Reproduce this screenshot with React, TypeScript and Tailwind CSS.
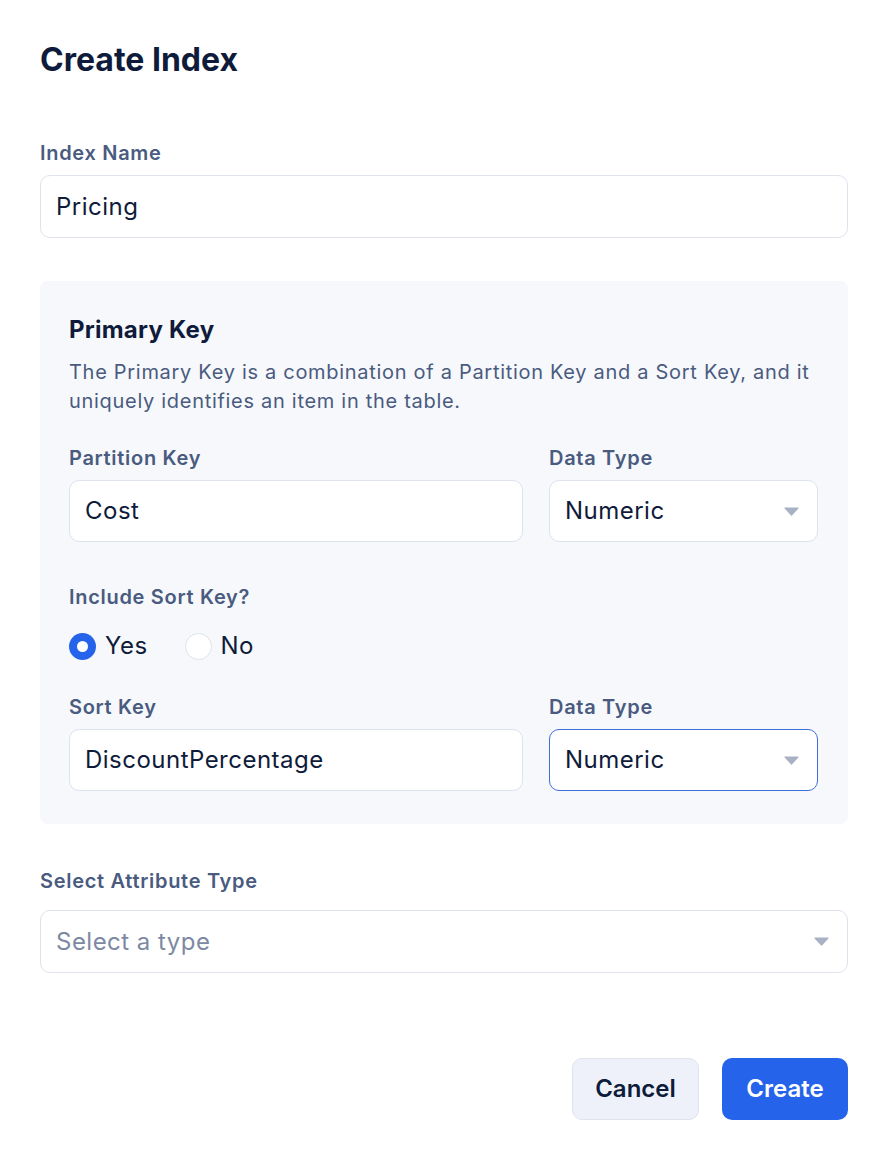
import React from 'react';

// Small down-pointing caret used in the select boxes
function Caret() {
  return (
    <svg width="15" height="9" viewBox="0 0 15 9" className="shrink-0">
      <path d="M1 1 L14 1 L7.5 8 Z" fill="#a9b1c4" stroke="#a9b1c4" strokeWidth="1.2" strokeLinejoin="round" />
    </svg>
  );
}

function Label({ children }: { children: React.ReactNode }) {
  return <div className="h-7 text-[20px] leading-7 font-semibold tracking-[0.035em] text-[#4a5b80]">{children}</div>;
}

function TextInput({ value }: { value: string }) {
  return (
    <div className="flex h-[62px] items-center rounded-[10px] border border-[#dde2ec] bg-white px-[15px] text-[24px] tracking-[0.02em] text-[#0f1b3a]">
      {value}
    </div>
  );
}

function SelectBox({ value, focused }: { value: string; focused?: boolean }) {
  return (
    <div
      className={
        focused
          ? 'flex h-[62px] items-center justify-between rounded-[10px] border border-[#3d6fdc] bg-white pl-[15px] pr-[18px] text-[24px] tracking-[0.02em]'
          : 'flex h-[62px] items-center justify-between rounded-[10px] border border-[#dde2ec] bg-white pl-[15px] pr-[18px] text-[24px] tracking-[0.02em]'
      }
    >
      <span className="text-[#0f1b3a]">{value}</span>
      <Caret />
    </div>
  );
}

function Radio({ checked, label }: { checked?: boolean; label: string }) {
  return (
    <label className="flex items-center gap-[9px]">
      {checked ? (
        <span className="flex h-[27px] w-[27px] items-center justify-center rounded-full bg-[#2563eb]">
          <span className="h-[11px] w-[11px] rounded-full bg-white" />
        </span>
      ) : (
        <span className="h-[27px] w-[27px] rounded-full border border-[#dde2ec] bg-white" />
      )}
      <span className="text-[24px] tracking-[0.02em] text-[#0f1b3a]">{label}</span>
    </label>
  );
}

export default function App() {
  return (
    <div className="min-h-[1164px] w-full bg-white font-['Inter','Liberation_Sans',sans-serif]">
      <div className="ml-10 w-[808px] pt-10 pb-11">
        <h1 className="h-10 text-[32px] leading-10 font-bold text-[#0f1b3a]">Create Index</h1>

        <div className="mt-[59px]">
          <Label>Index Name</Label>
          <div className="mt-2">
            <div className="flex h-[63px] items-center rounded-[10px] border border-[#dde2ec] bg-white px-[15px] text-[24px] tracking-[0.02em] text-[#0f1b3a]">
              Pricing
            </div>
          </div>
        </div>

        {/* Primary key panel */}
        <div className="mt-[43px] rounded-lg bg-[#f6f8fb] px-[29px] pt-[33px] pb-[33px]">
          <h2 className="h-8 text-[24px] leading-8 font-bold tracking-[0.01em] text-[#0f1b3a]">Primary Key</h2>
          <p className="mt-[12px] text-[20px] leading-[29px] tracking-[0.035em] text-[#4a5b80]">
            The Primary Key is a combination of a Partition Key and a Sort Key, and it uniquely identifies an item in the table.
          </p>

          <div className="mt-[28px] grid grid-cols-[454px_269px] gap-x-[26px]">
            <div>
              <Label>Partition Key</Label>
              <div className="mt-2">
                <TextInput value="Cost" />
              </div>
            </div>
            <div>
              <Label>Data Type</Label>
              <div className="mt-2">
                <SelectBox value="Numeric" />
              </div>
            </div>
          </div>

          <div className="mt-[41px]">
            <Label>Include Sort Key?</Label>
            <div className="mt-[21px] flex h-7 items-center gap-[37px]">
              <Radio checked label="Yes" />
              <Radio label="No" />
            </div>
          </div>

          <div className="mt-[33px] grid grid-cols-[454px_269px] gap-x-[26px]">
            <div>
              <Label>Sort Key</Label>
              <div className="mt-2">
                <TextInput value="DiscountPercentage" />
              </div>
            </div>
            <div>
              <Label>Data Type</Label>
              <div className="mt-2">
                <SelectBox value="Numeric" focused />
              </div>
            </div>
          </div>
        </div>

        <div className="mt-[43px]">
          <Label>Select Attribute Type</Label>
          <div className="mt-[15px]">
            <div className="flex h-[63px] items-center justify-between rounded-[10px] border border-[#dde2ec] bg-white pl-[15px] pr-[18px] text-[24px] tracking-[0.02em]">
              <span className="text-[#7d89a3]">Select a type</span>
              <Caret />
            </div>
          </div>
        </div>

        <div className="mt-[85px] flex justify-end gap-[23px]">
          <button className="h-[62px] w-[127px] rounded-[10px] border border-[#dfe3ee] bg-[#eef1f9] text-[24px] font-semibold text-[#0f1b3a]">
            Cancel
          </button>
          <button className="h-[62px] w-[126px] rounded-[10px] bg-[#2563eb] text-[24px] font-semibold text-white">
            Create
          </button>
        </div>
      </div>
    </div>
  );
}
